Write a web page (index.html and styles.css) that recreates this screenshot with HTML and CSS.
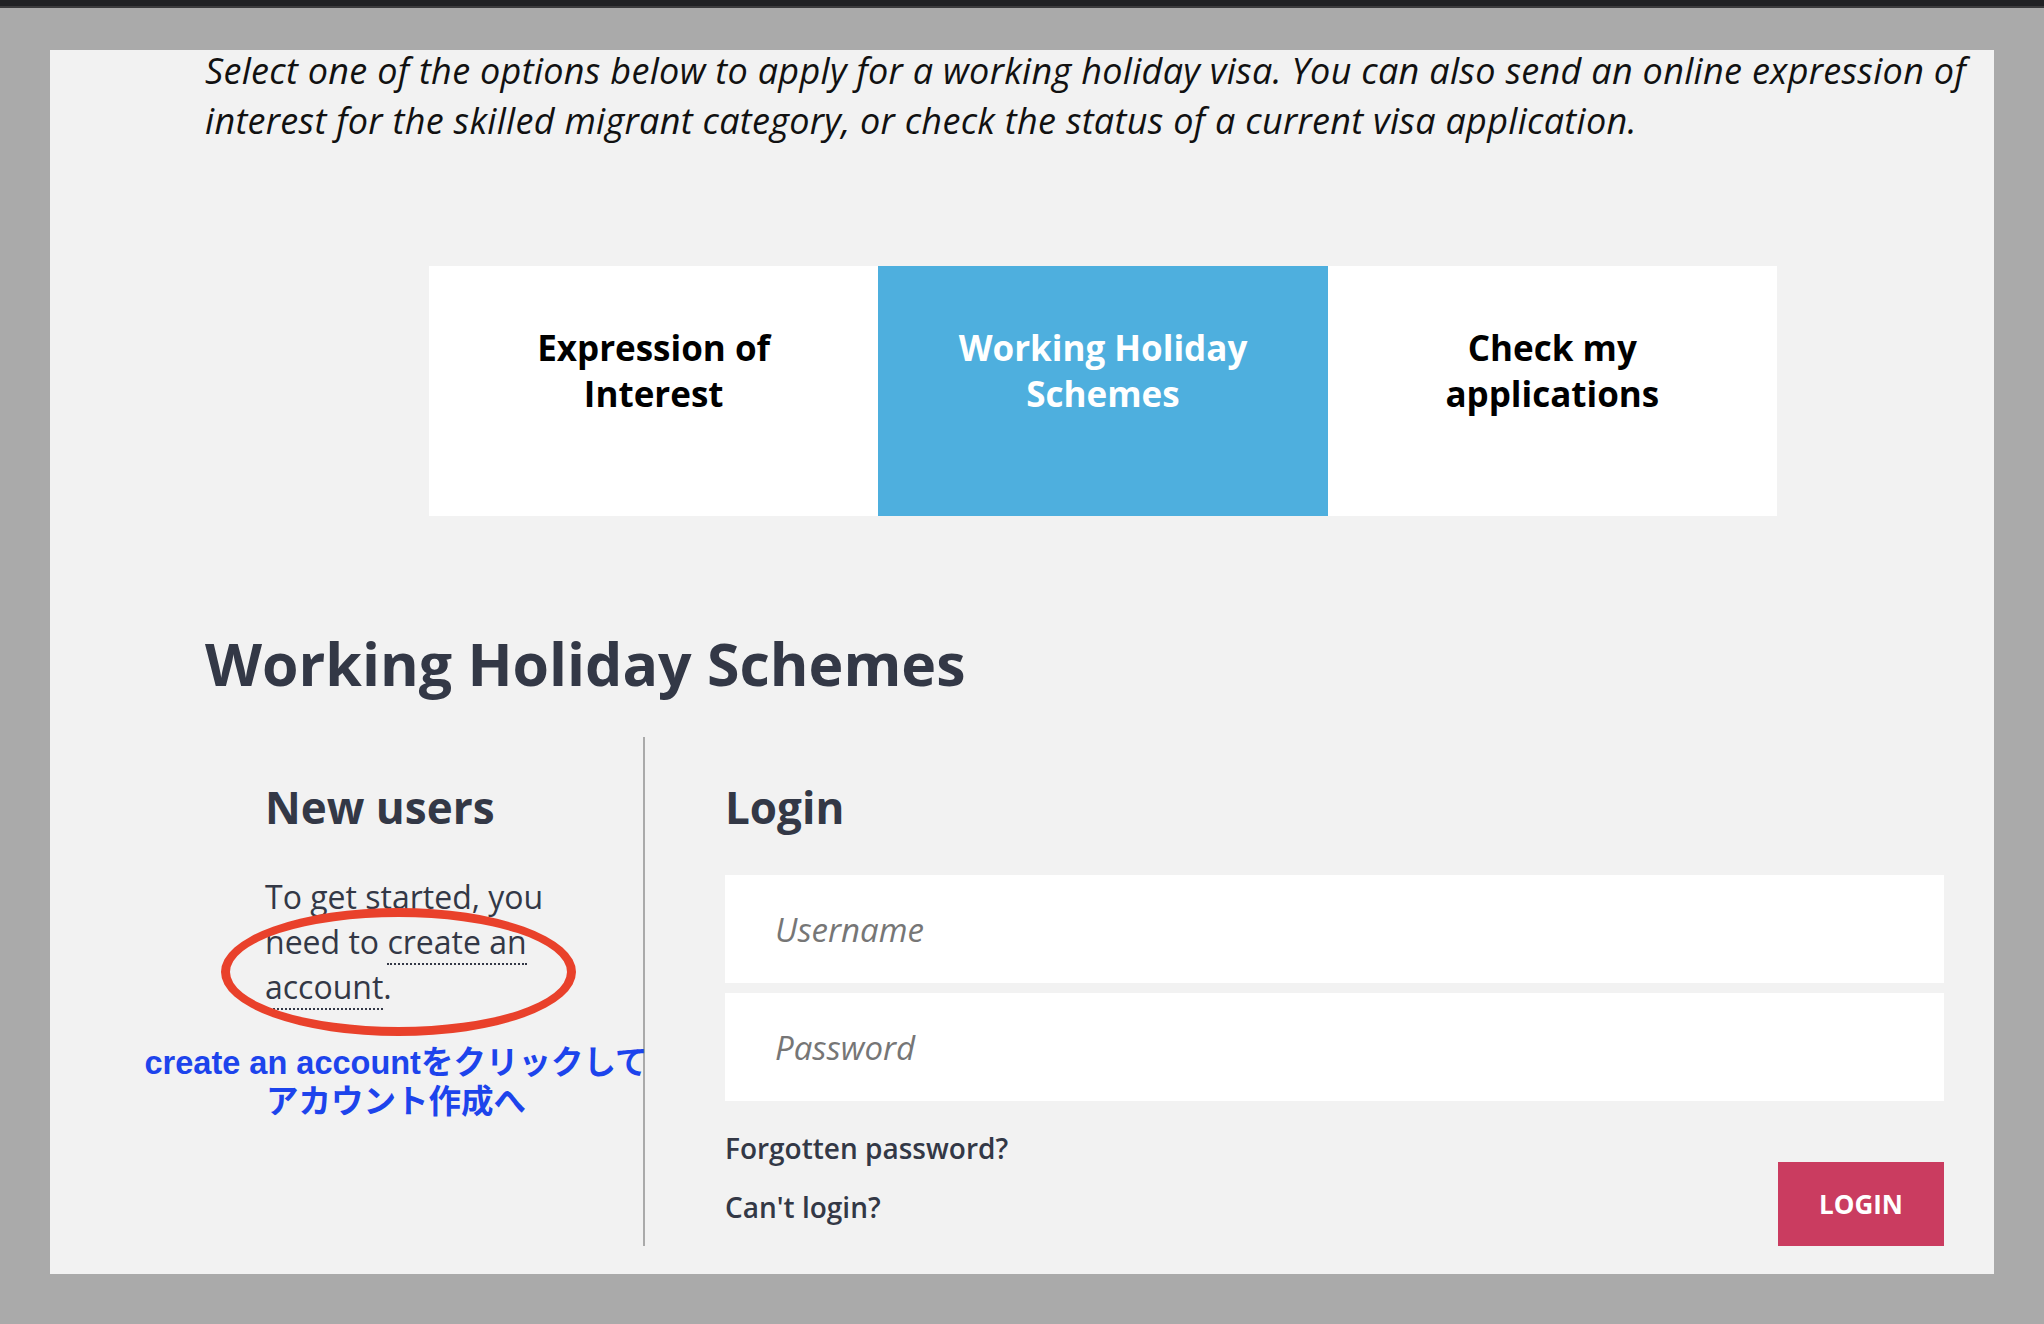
FILE: index.html
```html
<!DOCTYPE html>
<html lang="en">
<head>
    <meta charset="UTF-8">
    <meta name="viewport" content="width=device-width, initial-scale=1.0">
    <title>Working Holiday Schemes</title>
    <link rel="stylesheet" href="styles.css">
</head>
<body>

<div class="topbar"></div>

<div class="panel">
    <p class="intro">Select one of the options below to apply for a working holiday visa. You can also send an online expression of interest for the skilled migrant category, or check the status of a current visa application.</p>

    <div class="tabs">
        <a class="tab" href="#">Expression of<br>Interest</a>
        <a class="tab active" href="#">Working Holiday<br>Schemes</a>
        <a class="tab" href="#">Check my<br>applications</a>
    </div>

    <h1>Working Holiday Schemes</h1>

    <div class="columns">
        <div class="new-users">
            <h2>New users</h2>
            <p class="start">To get started, you need to <a href="#" class="dotted">create an account</a>.</p>

            <!-- annotation drawn over the screenshot -->
            <div class="circle"></div>
            <div class="note">create an accountをクリックして<br>アカウント作成へ</div>
        </div>

        <div class="login">
            <h2>Login</h2>
            <input type="text" placeholder="Username">
            <input type="password" placeholder="Password">
            <div class="login-foot">
                <div class="links">
                    <a href="#">Forgotten password?</a>
                    <a href="#">Can't login?</a>
                </div>
                <button>LOGIN</button>
            </div>
        </div>
    </div>
</div>

</body>
</html>
```

FILE: styles.css
```css
body {
    font-family: "Open Sans", "Noto Sans", sans-serif;
    background-color: #aaaaaa;
    margin: 0;
    color: #333846;
}
.topbar {
    height: 6px;
    background-color: #202124;
    border-bottom: 2px solid #3b3b3d;
}
.panel {
    display: flow-root;
    margin: 42px 0 0 50px;
    width: 1944px;
    height: 1224px;
    box-sizing: border-box;
    padding: 0 50px 0 155px;
    background-color: #f2f2f2;
}
.intro {
    margin: -4px -40px 0 0;
    font-size: 36px;
    line-height: 50px;
    letter-spacing: 0.3px;
    font-style: italic;
    color: #111111;
}
.tabs {
    display: flex;
    width: 1348px;
    height: 250px;
    margin: 120px 0 0 224px;
}
.tab {
    flex: 1;
    background-color: white;
    color: #000000;
    text-decoration: none;
    text-align: center;
    font-size: 35px;
    font-weight: bold;
    line-height: 46px;
    padding-top: 59px;
}
.tab.active {
    background-color: #4eafde;
    color: white;
}
h1 {
    margin: 107px 0 0 0;
    font-size: 59px;
    line-height: 80px;
    color: #333846;
}
.columns {
    display: flex;
    margin-top: 34px;
    height: 509px;
}
.new-users {
    position: relative;
    width: 440px;
    box-sizing: border-box;
    padding: 0 80px 0 60px;
    border-right: 2px solid #aaaaaa;
}
h2 {
    margin: 40px 0 0 0;
    font-size: 44px;
    line-height: 60px;
}
.start {
    margin: 37px 0 0 0;
    font-size: 32px;
    line-height: 45px;
}
.dotted {
    color: inherit;
    text-decoration: none;
    border-bottom: 2px dotted #333846;
}
.circle {
    position: absolute;
    left: 16px;
    top: 171px;
    width: 355px;
    height: 128px;
    box-sizing: border-box;
    border: 9px solid #e9412b;
    border-radius: 50%;
}
.note {
    position: absolute;
    left: -61px;
    top: 307px;
    width: 504px;
    text-align: center;
    font-family: "Liberation Sans", "Noto Sans CJK JP", sans-serif;
    font-weight: bold;
    font-size: 32.5px;
    line-height: 39px;
    color: #1d44ec;
    white-space: nowrap;
}
.login {
    flex: 1;
    padding-left: 80px;
    display: flex;
    flex-direction: column;
}
.login input {
    height: 108px;
    box-sizing: border-box;
    border: none;
    background-color: white;
    padding: 0 50px;
    font-family: inherit;
    font-size: 33px;
    margin-top: 10px;
}
.login h2 + input {
    margin-top: 38px;
}
.login input::placeholder {
    color: #767676;
    font-style: italic;
}
.login-foot {
    display: flex;
    justify-content: space-between;
    align-items: flex-end;
    margin-top: 28px;
}
.links a {
    display: block;
    color: #333846;
    text-decoration: none;
    font-size: 28px;
    font-weight: 600;
    line-height: 38px;
    margin-bottom: 21px;
}
.links a:last-child {
    margin-bottom: 20px;
}
button {
    width: 166px;
    height: 84px;
    border: none;
    background-color: #ca3c60;
    color: white;
    font-family: inherit;
    font-size: 26px;
    font-weight: bold;
    cursor: pointer;
}
```
